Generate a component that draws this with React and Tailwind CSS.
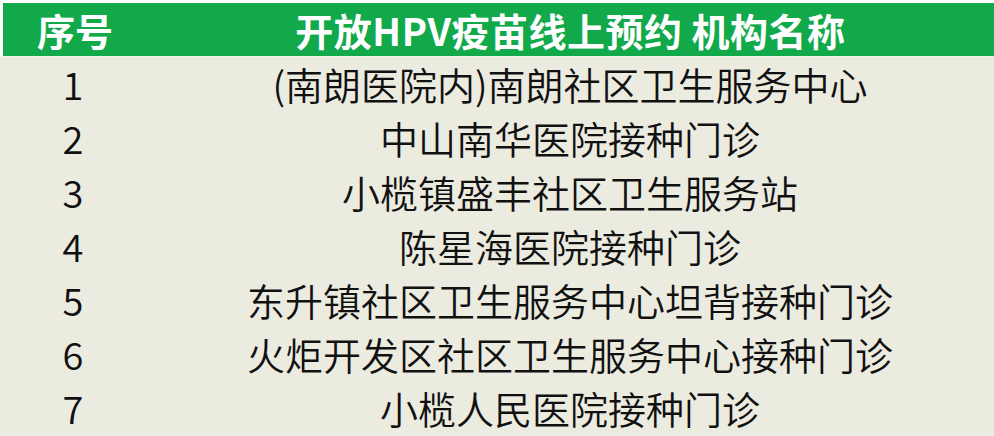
export default function App() {
  const rows = [
    "(南朗医院内)南朗社区卫生服务中心",
    "中山南华医院接种门诊",
    "小榄镇盛丰社区卫生服务站",
    "陈星海医院接种门诊",
    "东升镇社区卫生服务中心坦背接种门诊",
    "火炬开发区社区卫生服务中心接种门诊",
    "小榄人民医院接种门诊",
  ];
  return (
    <div className="w-[994px] h-[436px] bg-[#ecebe0] overflow-hidden font-['Noto_Sans_CJK_SC',sans-serif]">
      <div className="h-[3px] bg-white" />
      <div className="flex">
        <div className="w-[3px] bg-white" />
        <div className="flex-1 flex h-[53px] bg-[#12a94b] text-white font-bold text-[38px] leading-none items-center">
          <div className="w-[144px] text-center">序号</div>
          <div className="flex-1 text-center tracking-[0.5px]">开放HPV疫苗线上预约 机构名称</div>
        </div>
      </div>
      <div className="h-px bg-[#f3f3ea]" />
      {rows.map((r, i) => (
        <div key={i} className="flex h-[54px] items-center text-[38px] leading-none text-[#111] font-[350]">
          <div className="w-[146px] text-center">{i + 1}</div>
          <div className="flex-1 text-center">{r}</div>
        </div>
      ))}
    </div>
  );
}
